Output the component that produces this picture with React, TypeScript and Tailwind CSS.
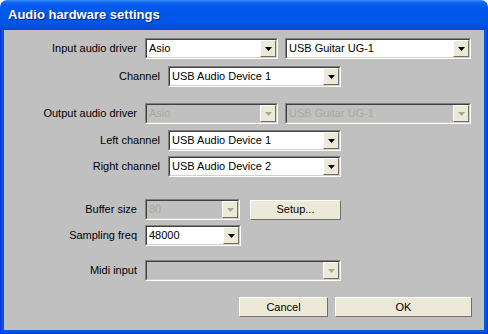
import React from "react";

const font = "font-['Tahoma','Liberation_Sans',sans-serif]";

function Arrow({ disabled }: { disabled?: boolean }) {
  return (
    <div className="w-[16px] h-[17px] bg-[#ece9d8] border-t border-l border-t-[#ffffff] border-l-[#ffffff] border-b border-r border-b-[#716f64] border-r-[#716f64] flex items-center justify-center">
      <svg width="7" height="4" viewBox="0 0 7 4">
        <polygon points="0,0 7,0 3.5,4" fill={disabled ? "#aca899" : "#000000"} />
      </svg>
    </div>
  );
}

function Combo({ width, value, disabled }: { width: string; value: string; disabled?: boolean }) {
  return (
    <div className={`${width} h-[21px] border-t border-l border-t-[#808080] border-l-[#808080] border-b border-r border-b-[#ffffff] border-r-[#ffffff]`}>
      <div
        className={`h-full flex items-center border-t border-l border-t-[#404040] border-l-[#404040] border-b border-r border-b-[#d4d0c8] border-r-[#d4d0c8] ${
          disabled ? "bg-[#c0c0c0]" : "bg-white"
        }`}
      >
        <span className={`flex-1 pl-[2px] text-[11px] leading-none truncate ${disabled ? "text-[#aca899]" : "text-black"}`}>
          {value}
        </span>
        <Arrow disabled={disabled} />
      </div>
    </div>
  );
}

function Button({ width, label }: { width: string; label: string }) {
  return (
    <div className={`${width} h-[20px] bg-[#ece9d8] border-t border-l border-t-white border-l-white border-b border-r border-b-[#716f64] border-r-[#716f64] flex items-center justify-center text-[11px] text-black`}>
      {label}
    </div>
  );
}

function Row({ label, labelW, children, className = "" }: { label: string; labelW: string; children: React.ReactNode; className?: string }) {
  return (
    <div className={`flex items-center h-[21px] ${className}`}>
      <div className={`${labelW} text-right text-[11px] text-black pr-[8px]`}>{label}</div>
      {children}
    </div>
  );
}

export default function App() {
  return (
    <div className={`w-[488px] h-[334px] bg-white ${font}`}>
      {/* title bar */}
      <div className="h-[30px] rounded-t-[7px] bg-[linear-gradient(to_bottom,#3a8cf7_0px,#0c62f0_3px,#0058ee_8px,#0055e5_24px,#0046d8_30px)] flex items-center pl-[8px]">
        <span className="text-white font-bold text-[13px] [text-shadow:1px_1px_#0a1e80]">Audio hardware settings</span>
      </div>
      <div className="h-[304px] bg-[#0055e5] border-l-[1px] border-r-[1px] border-b-[1px] border-[#0831d9] px-[3px] pb-[3px]">
        <div className="h-[300px] bg-[#c0c0c0] pt-[8px] flex flex-col">
          <Row label="Input audio driver" labelW="w-[141px]">
            <Combo width="w-[133px]" value="Asio" />
            <div className="w-[7px]" />
            <Combo width="w-[186px]" value="USB Guitar UG-1" />
          </Row>
          <Row label="Channel" labelW="w-[164px]" className="mt-[7px]">
            <Combo width="w-[173px]" value="USB Audio Device 1" />
          </Row>
          <Row label="Output audio driver" labelW="w-[141px]" className="mt-[16px]">
            <Combo width="w-[133px]" value="Asio" disabled />
            <div className="w-[7px]" />
            <Combo width="w-[186px]" value="USB Guitar UG-1" disabled />
          </Row>
          <Row label="Left channel" labelW="w-[164px]" className="mt-[6px]">
            <Combo width="w-[173px]" value="USB Audio Device 1" />
          </Row>
          <Row label="Right channel" labelW="w-[164px]" className="mt-[5px]">
            <Combo width="w-[173px]" value="USB Audio Device 2" />
          </Row>
          <Row label="Buffer size" labelW="w-[141px]" className="mt-[22px]">
            <Combo width="w-[95px]" value="80" disabled />
            <div className="w-[10px]" />
            <Button width="w-[91px]" label="Setup..." />
          </Row>
          <Row label="Sampling freq" labelW="w-[141px]" className="mt-[5px]">
            <Combo width="w-[96px]" value="48000" />
          </Row>
          <Row label="Midi input" labelW="w-[141px]" className="mt-[14px]">
            <Combo width="w-[196px]" value="" disabled />
          </Row>
          <div className="flex mt-[16px] pl-[235px]">
            <Button width="w-[89px]" label="Cancel" />
            <div className="w-[7px]" />
            <Button width="w-[137px]" label="OK" />
          </div>
        </div>
      </div>
    </div>
  );
}
